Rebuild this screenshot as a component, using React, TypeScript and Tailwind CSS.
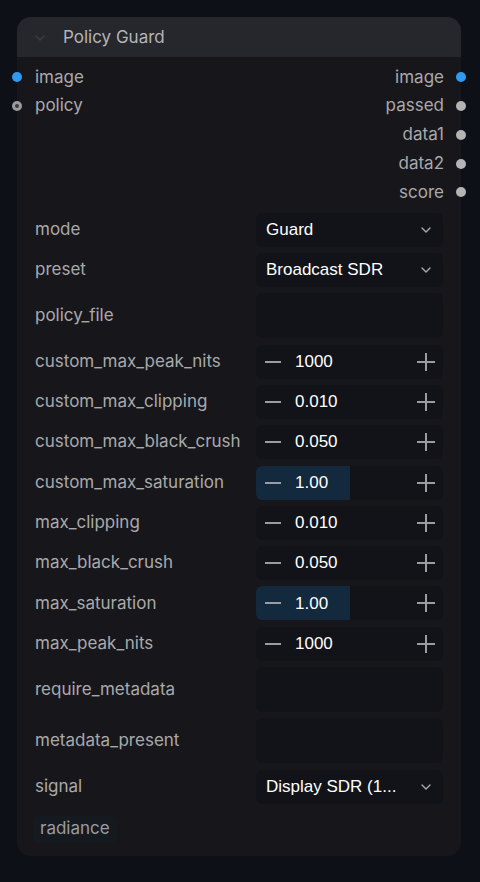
import React from "react";

type Widget =
  | { kind: "combo"; label: string; value: string }
  | { kind: "text"; label: string }
  | { kind: "number"; label: string; value: string; fill?: number };

const WIDGETS: Widget[] = [
  { kind: "combo", label: "mode", value: "Guard" },
  { kind: "combo", label: "preset", value: "Broadcast SDR" },
  { kind: "text", label: "policy_file" },
  { kind: "number", label: "custom_max_peak_nits", value: "1000" },
  { kind: "number", label: "custom_max_clipping", value: "0.010" },
  { kind: "number", label: "custom_max_black_crush", value: "0.050" },
  { kind: "number", label: "custom_max_saturation", value: "1.00", fill: 50 },
  { kind: "number", label: "max_clipping", value: "0.010" },
  { kind: "number", label: "max_black_crush", value: "0.050" },
  { kind: "number", label: "max_saturation", value: "1.00", fill: 50 },
  { kind: "number", label: "max_peak_nits", value: "1000" },
  { kind: "text", label: "require_metadata" },
  { kind: "text", label: "metadata_present" },
  { kind: "combo", label: "signal", value: "Display SDR (1..." },
];

const OUTPUTS = [
  { name: "image", blue: true },
  { name: "passed" },
  { name: "data1" },
  { name: "data2" },
  { name: "score" },
];

const VALUE_FONT = { fontFamily: "'Liberation Sans', Arial, sans-serif" };

function Chevron({ className }: { className?: string }) {
  return (
    <svg viewBox="0 0 12 8" className={className} fill="none" stroke="currentColor" strokeWidth={1.4}>
      <path d="M2 2l4 4 4-4" strokeLinecap="round" strokeLinejoin="round" />
    </svg>
  );
}

function Dot({ kind }: { kind: "blue" | "gray" | "ring" }) {
  if (kind === "ring")
    return (
      <span className="flex h-[10px] w-[10px] items-center justify-center rounded-full bg-[#9b9b9b]">
        <span className="block h-[4px] w-[4px] rounded-full bg-[#3a3a3e]" />
      </span>
    );
  return (
    <span
      className={`block h-[10px] w-[10px] rounded-full ${kind === "blue" ? "bg-[#2f9bf0]" : "bg-[#b4b4b4]"}`}
    />
  );
}

function WidgetBox({ w }: { w: Widget }) {
  if (w.kind === "text") return <div className="h-[45px] w-[187px] rounded-md bg-[#111318]" />;
  if (w.kind === "combo")
    return (
      <div className="flex h-[34px] w-[187px] items-center rounded-md bg-[#111318] pl-[10px] pr-[11px]">
        <span className="flex-1 truncate text-[17px] text-white" style={VALUE_FONT}>
          {w.value}
        </span>
        <Chevron className="h-[8px] w-[12px] text-[#a9a9ad]" />
      </div>
    );
  return (
    <div className="relative flex h-[34px] w-[187px] items-center overflow-hidden rounded-md bg-[#111318]">
      {w.fill !== undefined && (
        <div className="absolute inset-y-0 left-0 bg-[#13293d]" style={{ width: `${w.fill}%` }} />
      )}
      <span className="relative ml-[9px] block h-[2px] w-[16px] bg-[#9c9ca0]" />
      <span className="relative ml-[14px] flex-1 text-[17px] text-white" style={VALUE_FONT}>
        {w.value}
      </span>
      <span className="relative mr-[8px] flex h-[18px] w-[18px] items-center justify-center">
        <span className="absolute block h-[2px] w-[18px] bg-[#9c9ca0]" />
        <span className="absolute block h-[18px] w-[2px] bg-[#9c9ca0]" />
      </span>
    </div>
  );
}

export default function App() {
  return (
    <div
      className="min-h-[882px] bg-[#0d1016] pl-[17px] pt-[17px]"
      style={{ fontFamily: "Inter, 'Liberation Sans', sans-serif" }}
    >
      <div className="relative w-[444px] rounded-[14px] bg-[#17171b] pb-[13px] text-[17px]">
        <div className="flex h-[40px] items-center rounded-t-[14px] bg-[#26272c] pt-[1px]">
          <Chevron className="ml-[17px] h-[8px] w-[12px] text-[#3c3d44]" />
          <span className="ml-[17px] text-[#b4b4b8]">Policy Guard</span>
        </div>

        <div className="relative mt-[6px] flex">
          <div className="flex flex-1 flex-col">
            <div className="relative flex h-[28.75px] items-center">
              <span className="absolute left-[-5px]">
                <Dot kind="blue" />
              </span>
              <span className="ml-[18px] text-[#a9a9ac]">image</span>
            </div>
            <div className="relative flex h-[28.75px] items-center">
              <span className="absolute left-[-5px]">
                <Dot kind="ring" />
              </span>
              <span className="ml-[18px] text-[#a9a9ac]">policy</span>
            </div>
          </div>
          <div className="flex flex-col items-end">
            {OUTPUTS.map((o) => (
              <div key={o.name} className="relative flex h-[28.75px] items-center">
                <span className="mr-[17px] text-[#a9a9ac]">{o.name}</span>
                <span className="absolute right-[-5px]">
                  <Dot kind={o.blue ? "blue" : "gray"} />
                </span>
              </div>
            ))}
          </div>
        </div>

        <div className="mt-[6px] flex flex-col gap-[6.3px] pl-[18px] pr-[18px]">
          {WIDGETS.map((w) => (
            <div key={w.label} className="flex items-center justify-between">
              <span className="text-[#a9a9ac]">{w.label}</span>
              <WidgetBox w={w} />
            </div>
          ))}
        </div>

        <div className="mt-[12px] pl-[16px]">
          <span className="inline-flex h-[27px] items-center rounded-md bg-[#151a21] px-[7px] text-[#9c9ca0]">
            radiance
          </span>
        </div>
      </div>
    </div>
  );
}
